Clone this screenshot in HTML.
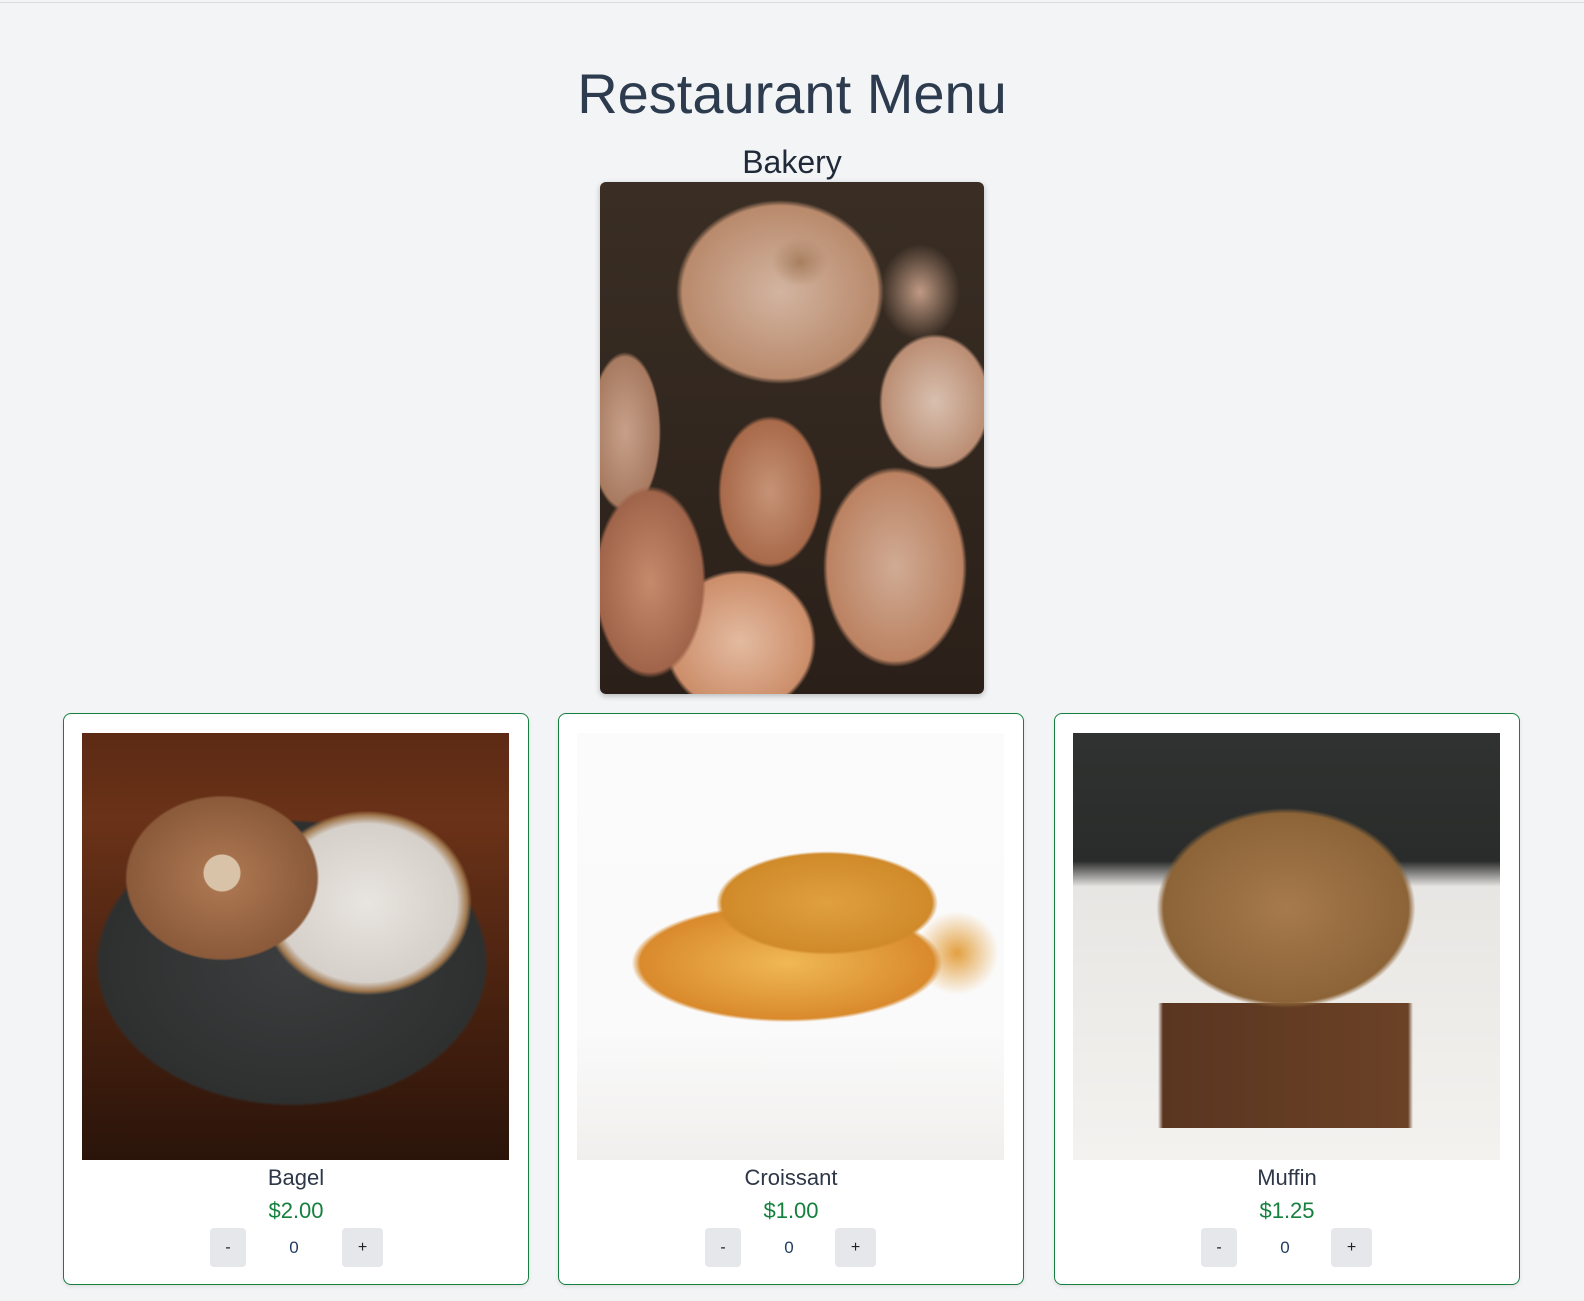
<!DOCTYPE html>
<html><head><meta charset="utf-8"><style>
html,body{margin:0;padding:0}
body{width:1584px;height:1301px;background:#f3f4f6;font-family:"Liberation Sans",sans-serif;position:relative;overflow:hidden;color:#2d3748}
.topline{position:absolute;left:0;top:2px;width:1584px;height:1px;background:#dcdcde}
h1{position:absolute;left:0;width:1584px;top:58px;margin:0;text-align:center;font-weight:400;font-size:56px;line-height:72px;color:#2d3b4e}
h2{position:absolute;left:0;width:1584px;top:142px;margin:0;text-align:center;font-weight:400;font-size:32px;line-height:40px;color:#1f2937}
.hero{position:absolute;left:600px;top:182px;width:384px;height:512px;border-radius:6px;overflow:hidden;box-shadow:0 2px 6px rgba(0,0,0,.25);
background:
radial-gradient(ellipse 40px 35px at 200px 80px,#a88060 0,transparent 70%),
radial-gradient(ellipse 130px 115px at 180px 110px,#d2b4a0 0,#b98a6c 75%,transparent 80%),
radial-gradient(ellipse 90px 125px at 295px 385px,#d0ab94 0,#bb8262 75%,transparent 80%),
radial-gradient(ellipse 65px 95px at 170px 310px,#c69276 0,#a86a4a 75%,transparent 80%),
radial-gradient(ellipse 70px 85px at 335px 220px,#d8bfae 0,#bb8e74 75%,transparent 80%),
radial-gradient(ellipse 70px 120px at 50px 400px,#c58a6c 0,#a0644a 75%,transparent 80%),
radial-gradient(ellipse 95px 90px at 140px 460px,#e3baa0 0,#cc8e6a 75%,transparent 80%),
radial-gradient(ellipse 45px 100px at 25px 250px,#c7a08a 0,#a77a60 75%,transparent 80%),
radial-gradient(ellipse 50px 60px at 320px 110px,#c09a84 0,transparent 80%),
linear-gradient(#3a2e24,#2a2019)}
.card{position:absolute;top:713px;width:466px;height:572px;background:#fff;border:1px solid #15803d;border-radius:8px;box-sizing:border-box;box-shadow:0 2px 4px rgba(0,0,0,.08)}
.img{position:absolute;left:18px;top:19px;width:427px;height:427px}
.name{position:absolute;left:0;width:100%;top:449px;text-align:center;font-size:22px;line-height:30px;color:#2d3748}
.price{position:absolute;left:0;width:100%;top:482px;text-align:center;font-size:22px;line-height:30px;color:#15803d}
.btn{position:absolute;top:514px;height:39px;background:#e5e7eb;border-radius:4px;text-align:center;line-height:39px;font-size:16px;color:#222}
.qty{position:absolute;top:514px;line-height:39px;font-size:17px;color:#1f3a5f;text-align:center;width:20px}
</style></head><body>
<div class="topline"></div>
<h1>Restaurant Menu</h1>
<h2>Bakery</h2>
<div class="hero"></div>

<div class="card" style="left:63px">
<div class="img" style="background:
radial-gradient(circle at 140px 140px,#d9c3a8 0,#d9c3a8 18px,transparent 19px),
radial-gradient(ellipse 135px 115px at 140px 145px,#b07a54 0,#8a5a3a 70%,transparent 72%),
radial-gradient(ellipse 125px 110px at 285px 170px,#e8e4df 0,#d6d0ca 72%,#a0784e 80%,transparent 84%),
radial-gradient(ellipse 240px 175px at 210px 230px,#3b3d3e 0,#2e3030 80%,transparent 82%),
linear-gradient(#5c2a14 0,#6a3218 20%,#4a2210 60%,#2a140a 100%)"></div>
<div class="name">Bagel</div><div class="price">$2.00</div>
<div class="btn" style="left:146px;width:36px">-</div>
<div class="qty" style="left:220px">0</div>
<div class="btn" style="left:278px;width:41px">+</div>
</div>

<div class="card" style="left:558px">
<div class="img" style="background:
radial-gradient(ellipse 150px 70px at 250px 170px,#e0a040 0,#d08a2a 70%,transparent 74%),
radial-gradient(ellipse 210px 80px at 210px 230px,#f0b855 0,#d98a2c 70%,transparent 74%),
radial-gradient(ellipse 60px 60px at 380px 220px,#e3a040 0,transparent 70%),
linear-gradient(#fbfbfb 0,#fafafa 70%,#f1efee 100%)"></div>
<div class="name">Croissant</div><div class="price">$1.00</div>
<div class="btn" style="left:146px;width:36px">-</div>
<div class="qty" style="left:220px">0</div>
<div class="btn" style="left:276px;width:41px">+</div>
</div>

<div class="card" style="left:1054px">
<div class="img" style="background:
radial-gradient(ellipse 175px 135px at 213px 175px,#a67a4c 0,#8c6438 70%,transparent 74%),
linear-gradient(to right,transparent 85px,#5a3520 90px,#6b4226 335px,transparent 340px) 0 270px/100% 125px no-repeat,
linear-gradient(#2f3230 0,#2a2c2b 30%,#e8e6e3 36%,#f4f2ef 100%)"></div>
<div class="name">Muffin</div><div class="price">$1.25</div>
<div class="btn" style="left:146px;width:36px">-</div>
<div class="qty" style="left:220px">0</div>
<div class="btn" style="left:276px;width:41px">+</div>
</div>
</body></html>
